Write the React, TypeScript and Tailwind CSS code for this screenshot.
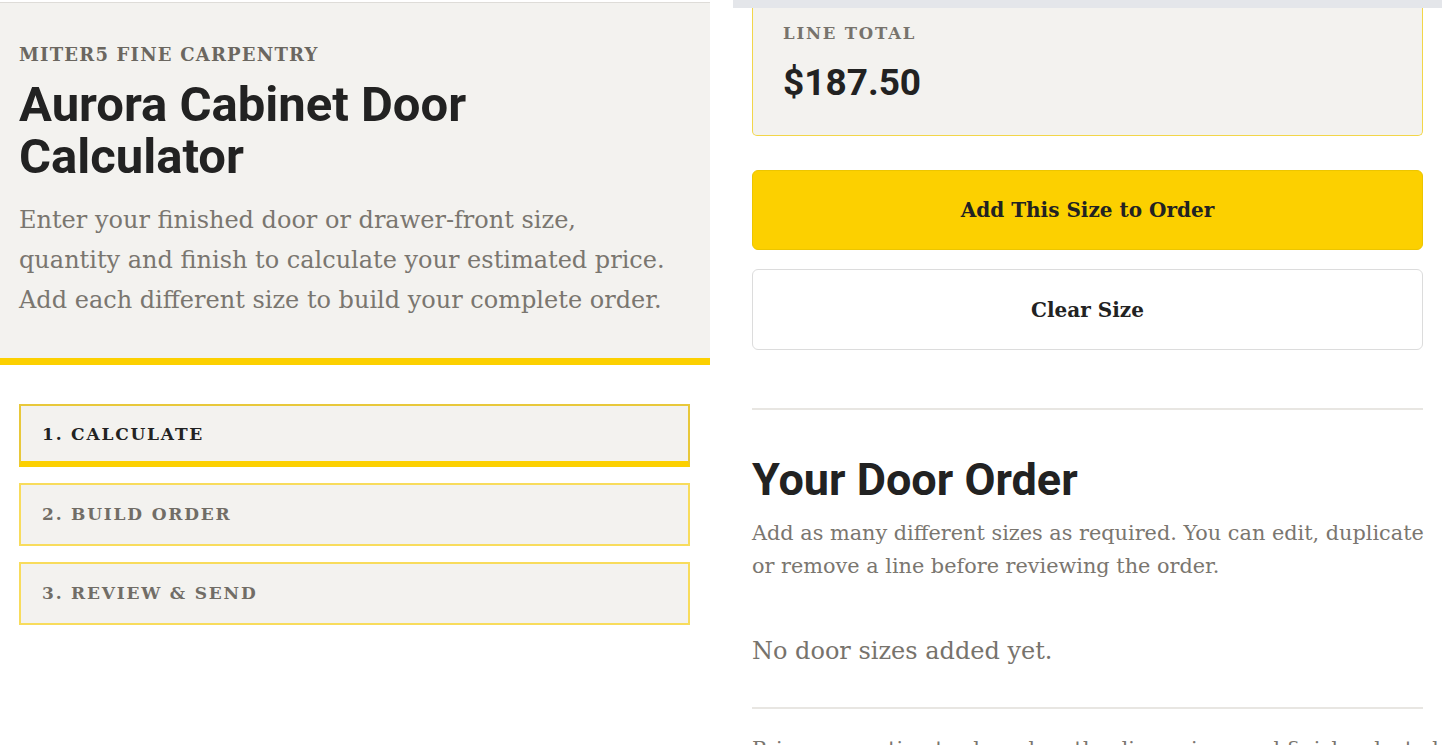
const serif = "font-['DejaVu_Serif','Liberation_Serif',serif]";
const sans = "font-['Roboto','Liberation_Sans',sans-serif]";

const steps = [
  { label: "1. CALCULATE", active: true },
  { label: "2. BUILD ORDER", active: false },
  { label: "3. REVIEW & SEND", active: false }
];

const StepTab = ({ label, active }: { label: string; active: boolean }) => (
  <div
    className={
      active
        ? "flex h-[63px] items-center border-2 border-b-[6px] border-[#e8c83a] border-b-[#fcd000] bg-[#f3f2ef] pl-[21px] pt-[2px]"
        : "flex h-[63px] items-center border-2 border-[#f8dc5c] bg-[#f3f2ef] pl-[21px]"
    }
  >
    <span
      className={`${serif} text-[17px] font-bold tracking-[1.8px] ${
        active ? "text-[#222222]" : "text-[#716d66]"
      }`}
    >
      {label}
    </span>
  </div>
);

const CalculatorIntro = () => (
  <div className="flex w-[710px] shrink-0 flex-col">
    <div className="h-[2px] bg-white" />
    <div className="border-t border-[#dedcd8] bg-[#f3f2ef] px-[19px] pb-[38px] pt-[38px]">
      <p className={`${serif} text-[18px] font-bold leading-[28px] tracking-[1.2px] text-[#6b6760]`}>
        MITER5 FINE CARPENTRY
      </p>
      <h1 className={`${sans} mt-[10px] text-[49px] font-bold leading-[52px] text-[#222222]`}>
        Aurora Cabinet Door
        <br />
        Calculator
      </h1>
      <p className={`${serif} mt-[17px] whitespace-nowrap text-[24px] leading-[40px] text-[#7a766f]`}>
        Enter your finished door or drawer-front size,
        <br />
        quantity and finish to calculate your estimated price.
        <br />
        Add each different size to build your complete order.
      </p>
    </div>
    <div className="h-[7px] bg-[#fcd000]" />
    <div className="flex flex-col gap-[16px] pl-[19px] pr-[20px] pt-[39px]">
      {steps.map((s) => (
        <StepTab key={s.label} label={s.label} active={s.active} />
      ))}
    </div>
  </div>
);

const OrderPanel = () => (
  <div className="ml-[23px] flex min-w-0 flex-1 flex-col">
    <div className="h-[8px] shrink-0 bg-[#e4e6ea]" />
    <div className="px-[19px]">
      <div className="rounded-b-[5px] border border-t-0 border-[#f2d649] bg-[#f3f2ef] px-[30px] pb-[30px] pt-[14px]">
        <p className={`${serif} text-[16.5px] font-bold leading-[24px] tracking-[1.8px] text-[#77736c]`}>
          LINE TOTAL
        </p>
        <p className={`${sans} mt-[15px] text-[37px] font-bold leading-[44px] text-[#222222]`}>
          $187.50
        </p>
      </div>

      <button className={`${serif} mt-[34px] flex h-[80px] w-full items-center justify-center rounded-[6px] border border-[#ecc500] bg-[#fcd000] text-[20px] font-bold text-[#222222]`}>
        Add This Size to Order
      </button>
      <button className={`${serif} mt-[19px] flex h-[81px] w-full items-center justify-center rounded-[6px] border border-[#dcdcdc] bg-white text-[20px] font-bold text-[#222222]`}>
        Clear Size
      </button>

      <hr className="mt-[58px] border-t-2 border-[#e8e6e2]" />

      <h2 className={`${sans} mt-[44px] text-[45px] font-bold leading-[52px] text-[#222222]`}>
        Your Door Order
      </h2>
      <p className={`${serif} mt-[11px] whitespace-nowrap text-[20.8px] leading-[33px] text-[#7a766f]`}>
        Add as many different sizes as required. You can edit, duplicate
        <br />
        or remove a line before reviewing the order.
      </p>
      <p className={`${serif} mt-[50px] text-[24px] leading-[36px] text-[#77736c]`}>
        No door sizes added yet.
      </p>

      <hr className="mt-[38px] border-t-2 border-[#e8e6e2]" />

      <p className={`${serif} mt-[24px] whitespace-nowrap text-[20.8px] leading-[33px] text-[#7a766f]`}>
        Prices are estimates based on the dimensions and finish selected above.
      </p>
    </div>
  </div>
);

export default function App() {
  return (
    <div className="flex h-[745px] w-[1442px] overflow-hidden bg-white">
      <CalculatorIntro />
      <OrderPanel />
    </div>
  );
}
